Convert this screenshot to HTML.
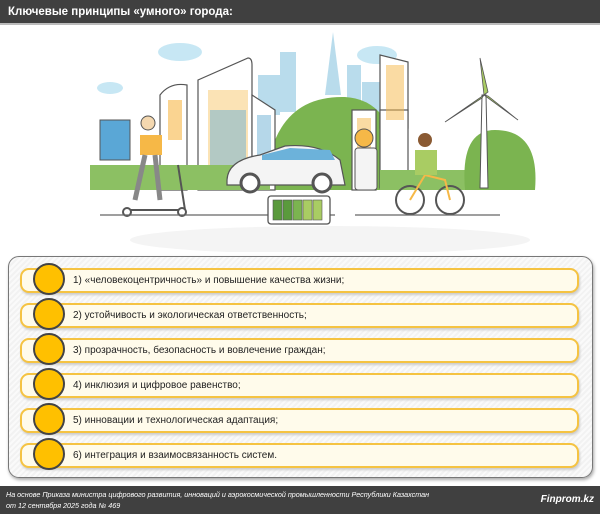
<!DOCTYPE html>
<html><head><meta charset="utf-8"><style>
*{margin:0;padding:0;box-sizing:border-box}
body{width:600px;height:514px;background:#fff;font-family:"Liberation Sans",sans-serif;position:relative;overflow:hidden}
.hdr{position:absolute;left:0;top:0;width:600px;height:25px;background:#404040;border-bottom:2px solid #bbb;color:#fff;font-weight:bold;font-size:11.5px;padding:6px 0 0 8px}
.panel{position:absolute;left:8px;top:256px;width:585px;height:222px;border:1.5px solid #777;border-radius:11px;background:repeating-linear-gradient(135deg,#fafafa 0 2px,#f2f2f2 2px 4px);box-shadow:1px 2px 3px #aaa}
.pill{position:absolute;left:20px;width:559px;height:25px;border:2px solid #f5c342;border-radius:9px;background:#fffbeb;box-shadow:1px 2px 2px #ccc;font-size:10px;color:#222;padding:5px 0 0 51px}
.dot{position:absolute;left:33px;width:32px;height:32px;border-radius:50%;background:#ffc000;border:2px solid #444}
.ftr{position:absolute;left:0;top:486px;width:600px;height:28px;background:#404040;color:#fff;font-style:italic;font-size:7.2px;line-height:11px;padding:3px 0 0 6px}
.ftr b{position:absolute;right:6px;top:8px;font-size:10px}
</style></head><body>
<div class="hdr">Ключевые принципы «умного» города:</div>
<svg style="position:absolute;left:0;top:27px" width="600" height="225" viewBox="0 27 600 225">
<ellipse cx="330" cy="240" rx="200" ry="14" fill="#f4f4f4"/>
<g fill="#b9dcec"><rect x="280" y="52" width="16" height="60"/><rect x="258" y="75" width="22" height="40"/><polygon points="333,32 325,95 341,95"/><rect x="347" y="65" width="14" height="50"/><rect x="362" y="82" width="40" height="35"/></g>
<g fill="#c7e7f4"><ellipse cx="180" cy="52" rx="22" ry="9"/><ellipse cx="377" cy="55" rx="20" ry="9"/><ellipse cx="110" cy="88" rx="13" ry="6"/></g>
<path d="M265 190 Q270 95 345 97 Q400 100 400 190Z" fill="#7bb450"/>
<g stroke="#555" stroke-width="1.2" fill="#fff">
<path d="M160 95 Q170 82 187 85 V190 H160Z"/>
<path d="M198 80 L248 58 Q252 58 252 65 V190 H198Z"/>
<path d="M252 95 L275 110 V190 H252Z"/>
<path d="M380 55 L408 62 V128 H380Z"/>
<rect x="380" y="110" width="28" height="78"/>
<rect x="352" y="110" width="24" height="80"/>
</g>
<g fill="#f6b847"><rect x="168" y="100" width="14" height="40" opacity=".6"/><rect x="208" y="90" width="40" height="90" opacity=".4"/><rect x="386" y="65" width="18" height="55" opacity=".5"/><rect x="357" y="118" width="14" height="45" opacity=".5"/></g>
<g fill="#6bb0d4" opacity=".5"><rect x="210" y="110" width="36" height="60"/><rect x="257" y="115" width="14" height="60"/></g>
<rect x="100" y="120" width="30" height="40" fill="#5aa7d6" stroke="#555"/>
<rect x="90" y="165" width="180" height="25" fill="#8cc063"/>
<rect x="380" y="170" width="100" height="20" fill="#8cc063"/>
<path d="M465 190 Q460 130 495 130 Q540 130 535 190Z" fill="#7bb450"/>
<path d="M480 188 L482 95 L486 95 L488 188Z" fill="#fff" stroke="#555"/>
<g fill="#a9cc63" stroke="#555" stroke-width=".8"><path d="M484 95 L480 58 L488 92Z"/><path d="M484 95 L445 122 L482 98Z"/><path d="M484 95 L518 120 L488 96Z"/></g>
<path d="M227 180 Q228 160 260 155 L285 146 Q320 143 340 160 L345 185 H227Z" fill="#f4f4f4" stroke="#555" stroke-width="1.2"/>
<path d="M262 155 L290 148 L330 150 L335 160 H262Z" fill="#6cb2da"/>
<circle cx="250" cy="183" r="9" fill="#fff" stroke="#555" stroke-width="3"/><circle cx="322" cy="183" r="9" fill="#fff" stroke="#555" stroke-width="3"/>
<rect x="355" y="148" width="22" height="42" rx="3" fill="#f4f4f4" stroke="#555"/>
<circle cx="364" cy="138" r="9" fill="#f6b847" stroke="#555"/>
<rect x="140" y="135" width="22" height="20" fill="#f6b847"/><circle cx="148" cy="123" r="7" fill="#f4d8b0" stroke="#555"/>
<path d="M145 155 L135 200 M155 155 L160 200" stroke="#888" stroke-width="5"/>
<path d="M125 210 H185 L178 165" stroke="#555" stroke-width="2" fill="none"/>
<circle cx="127" cy="212" r="4" fill="#fff" stroke="#555" stroke-width="2"/><circle cx="182" cy="212" r="4" fill="#fff" stroke="#555" stroke-width="2"/>
<circle cx="410" cy="200" r="14" fill="none" stroke="#555" stroke-width="2"/><circle cx="450" cy="200" r="14" fill="none" stroke="#555" stroke-width="2"/>
<path d="M410 200 L425 175 L445 180 L450 200" stroke="#f6b847" stroke-width="2" fill="none"/>
<rect x="415" y="150" width="22" height="25" fill="#a9cc63"/><circle cx="425" cy="140" r="7" fill="#8a5a33"/>
<path d="M100 215 H335 M355 215 H500" stroke="#666" stroke-width="1.3"/>
<rect x="268" y="196" width="62" height="28" rx="3" fill="#fff" stroke="#555" stroke-width="1.3"/>
<g fill="#5a9a3c" stroke="#555" stroke-width=".6"><rect x="273" y="200" width="9" height="20"/><rect x="283" y="200" width="9" height="20"/><rect x="293" y="200" width="9" height="20" fill="#7bb450"/><rect x="303" y="200" width="9" height="20" fill="#a9cc63"/><rect x="313" y="200" width="9" height="20" fill="#a9cc63"/></g>
</svg>
<div class="panel"></div>
<div class="pill" style="top:268px">1) «человекоцентричность» и повышение качества жизни;</div>
<div class="pill" style="top:303px">2) устойчивость и экологическая ответственность;</div>
<div class="pill" style="top:338px">3) прозрачность, безопасность и вовлечение граждан;</div>
<div class="pill" style="top:373px">4) инклюзия и цифровое равенство;</div>
<div class="pill" style="top:408px">5) инновации и технологическая адаптация;</div>
<div class="pill" style="top:443px">6) интеграция и взаимосвязанность систем.</div>
<div class="dot" style="top:263px"></div><div class="dot" style="top:298px"></div><div class="dot" style="top:333px"></div><div class="dot" style="top:368px"></div><div class="dot" style="top:403px"></div><div class="dot" style="top:438px"></div>
<div class="ftr">На основе Приказа министра цифрового развития, инноваций и аэрокосмической промышленности Республики Казахстан<br>от 12 сентября 2025 года № 469<b>Finprom.kz</b></div>
</body></html>
